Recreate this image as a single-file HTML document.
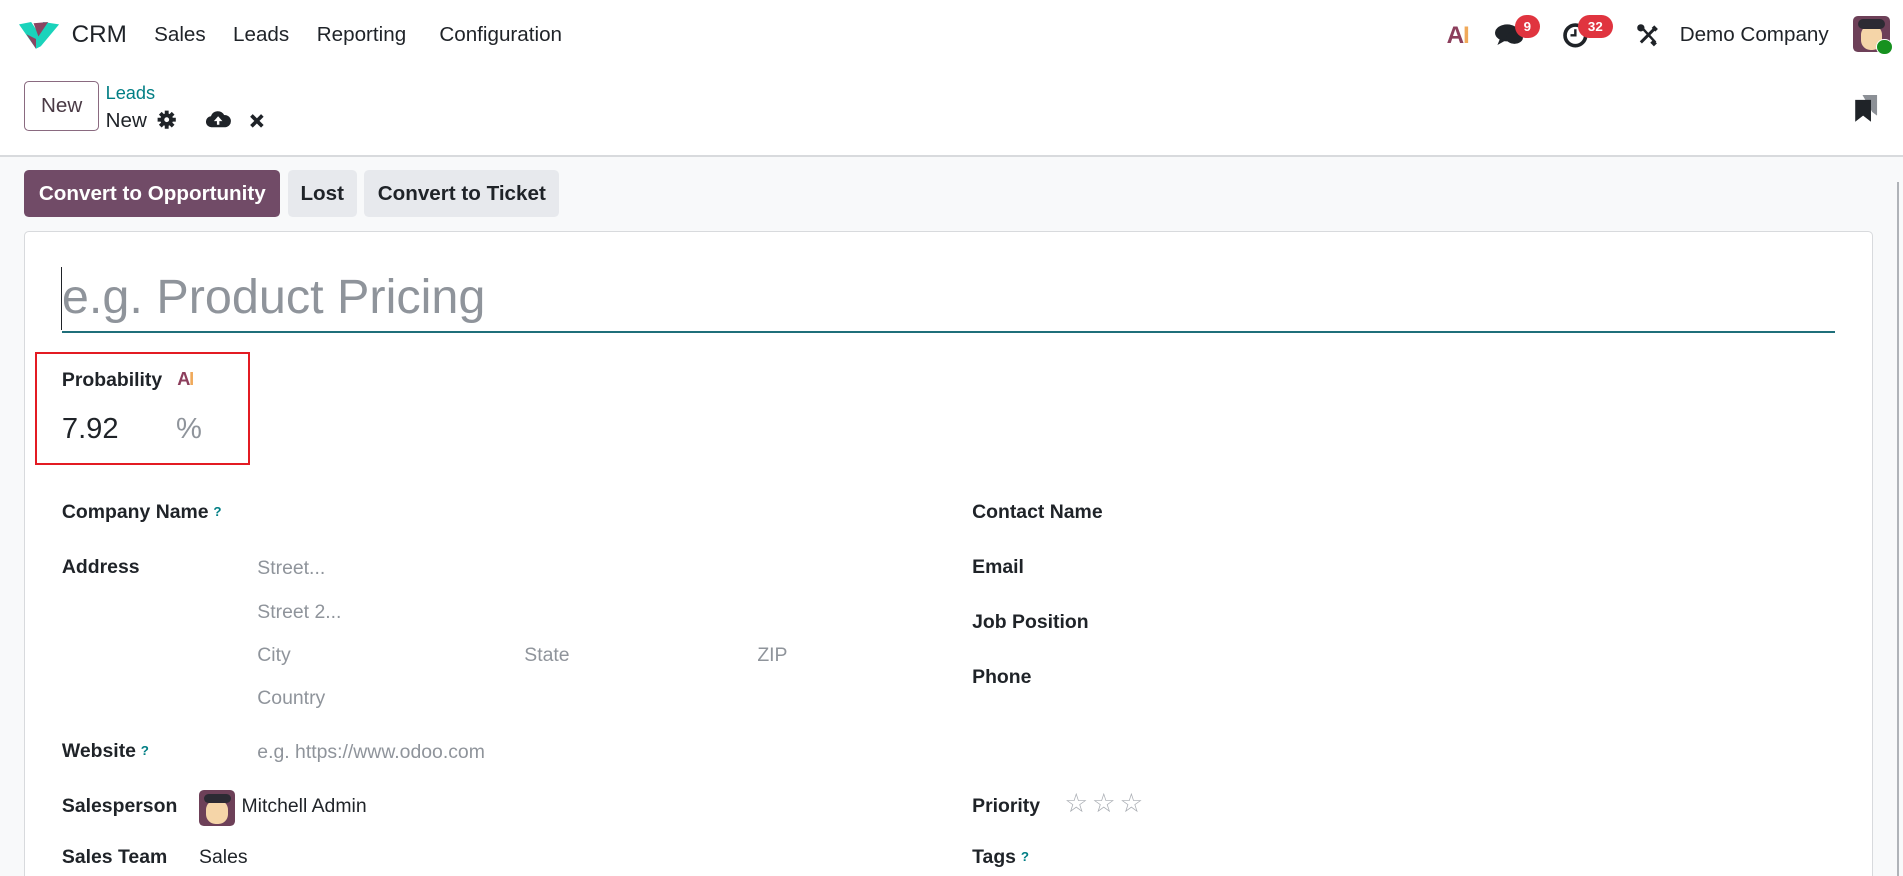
<!DOCTYPE html>
<html><head><meta charset="utf-8"><style>
html,body{margin:0;padding:0;overflow:hidden}
html{background:#f8f9fa}
body{width:1568px;height:722px;zoom:1.21365;overflow:hidden;position:relative;font-family:"Liberation Sans",sans-serif;color:#1f2328;background:#fff}
.a{position:absolute;white-space:nowrap}
.nav{font-size:17px;top:19px}
.lbl{font-size:16px;font-weight:bold;line-height:20px}
.ph{font-size:16px;color:#8f949b;line-height:20px}
.q{color:#017e84;font-size:11px;font-weight:bold;vertical-align:top;margin-left:4px}
.btn{position:absolute;top:140px;height:39px;line-height:39px;border-radius:4px;font-size:17px;font-weight:bold;text-align:center}
.badge{position:absolute;background:#e0343f;color:#fff;font-size:11px;font-weight:bold;border-radius:10px;height:19px;line-height:19px;text-align:center}
</style></head><body>
<svg class="a" style="left:16px;top:18px" width="33" height="22" viewBox="0 0 33 22"><path d="M0 2 L10 0 L14 6 L20 0 L33 2 L18 20 L14 22 Z" fill="#1ad3bb"/><path d="M12 1 L24 0 L16 12 Z" fill="#8a4561"/><path d="M6 10 L14 14 L14 22 Z" fill="#8a4561"/></svg>
<div class="a" style="left:59px;top:17px;font-size:20px">CRM</div>
<div class="a nav" style="left:127px">Sales</div>
<div class="a nav" style="left:192px">Leads</div>
<div class="a nav" style="left:261px">Reporting</div>
<div class="a nav" style="left:362px">Configuration</div>
<div class="a" style="left:1192px;top:18px;font-size:20px;font-weight:bold;letter-spacing:-1px"><span style="color:#8c3e5c">A</span><span style="color:#f0a95a">I</span></div>
<svg class="a" style="left:1232px;top:18px" width="24" height="22" viewBox="0 0 24 22"><ellipse cx="10" cy="9" rx="10" ry="7" fill="#1f2328"/><path d="M4 14 L2 19 L9 15Z" fill="#1f2328"/><ellipse cx="16" cy="13" rx="7" ry="5" fill="#1f2328"/></svg>
<div class="badge" style="left:1248px;top:12px;width:21px">9</div>
<svg class="a" style="left:1287px;top:18px" width="22" height="22" viewBox="0 0 22 22"><circle cx="11" cy="11" r="8.5" fill="none" stroke="#1f2328" stroke-width="3"/><path d="M11 6 V11 H7" stroke="#1f2328" stroke-width="2" fill="none"/></svg>
<div class="badge" style="left:1300px;top:12px;width:29px">32</div>
<svg class="a" style="left:1348px;top:19px" width="20" height="20" viewBox="0 0 20 20"><path d="M4 16 L15 5" stroke="#1f2328" stroke-width="2.5"/><path d="M14 3 L17 6" stroke="#1f2328" stroke-width="3"/><path d="M5 4 L16 16" stroke="#1f2328" stroke-width="2"/><circle cx="4" cy="4" r="3" fill="#1f2328"/><path d="M13 15 L16 18" stroke="#1f2328" stroke-width="3.5"/></svg>
<div class="a" style="left:1384px;top:19px;font-size:17px">Demo Company</div>
<div class="a" style="left:1527px;top:13px;width:30px;height:30px;border-radius:4px;background:#6d4058;overflow:hidden"><div style="position:absolute;left:6px;top:8px;width:18px;height:20px;border-radius:8px;background:#f5d5a8"></div><div style="position:absolute;left:4px;top:3px;width:22px;height:8px;border-radius:6px;background:#2c2a33"></div></div>
<div class="a" style="left:1546px;top:32px;width:12px;height:12px;border-radius:50%;background:#16911f;border:1px solid #fff"></div>
<div class="a" style="left:20px;top:67px;width:60px;height:39px;border:1px solid #8a6a80;border-radius:4px;text-align:center;line-height:39px;font-size:17px;color:#4a3a45">New</div>
<div class="a" style="left:87px;top:68px;font-size:15px;color:#017e84">Leads</div>
<div class="a" style="left:87px;top:90px;font-size:17px">New</div>
<svg class="a" style="left:129px;top:91px" width="16" height="16" viewBox="0 0 16 16"><g stroke="#1f2328" stroke-width="3.2"><path d="M8 0.5V15.5M0.5 8H15.5M2.7 2.7L13.3 13.3M13.3 2.7L2.7 13.3"/></g><circle cx="8" cy="8" r="5.2" fill="#1f2328"/><circle cx="8" cy="8" r="2" fill="#fff"/></svg>
<svg class="a" style="left:170px;top:90px" width="20" height="16" viewBox="0 0 20 16"><path d="M5 15 A4.5 4.5 0 0 1 4 6 A6 6 0 0 1 15 5 A4.5 4.5 0 0 1 16 15Z" fill="#1f2328"/><path d="M10 6 L6.5 10 H9 V13 H11 V10 H13.5Z" fill="#fff"/></svg>
<svg class="a" style="left:205px;top:93px" width="13" height="13" viewBox="0 0 13 13"><path d="M2 2 L11 11 M11 2 L2 11" stroke="#1f2328" stroke-width="3"/></svg>
<svg class="a" style="left:1528px;top:78px" width="20" height="24" viewBox="0 0 20 24"><path d="M7 0 H19 V17 L15 14 Z" fill="#8c9096"/><path d="M1 4 H14 V22 L7.5 17 L1 22Z" fill="#1f2328"/></svg>
<div class="a" style="left:0;top:128px;width:1568px;height:1px;background:#d8dadd"></div>
<div class="a" style="left:0;top:129px;width:1568px;height:593px;background:#f8f9fa"></div>
<div class="btn" style="left:20px;width:211px;background:#714b67;color:#fff">Convert to Opportunity</div>
<div class="btn" style="left:237px;width:57px;background:#e7e9ed">Lost</div>
<div class="btn" style="left:300px;width:161px;background:#e7e9ed">Convert to Ticket</div>
<div class="a" style="left:20px;top:190px;width:1522px;height:531px;background:#fff;border:1px solid #d8dadd;border-bottom:none;border-radius:4px 4px 0 0"></div>
<div class="a" style="left:1563px;top:150px;width:2px;height:572px;background:#b0b3b8"></div>
<div class="a" style="left:50px;top:220px;width:1.5px;height:52px;background:#1f2328"></div>
<div class="a" style="left:51px;top:222px;font-size:40px;color:#8f949b">e.g. Product Pricing</div>
<div class="a" style="left:51px;top:273px;width:1461px;height:1px;background:#1f6f7a"></div>
<div class="a" style="left:29px;top:290px;width:174px;height:90px;border:2px solid #e31b23"></div>
<div class="a lbl" style="left:51px;top:303px">Probability</div>
<div class="a" style="left:146px;top:304px;font-size:15px;font-weight:bold;letter-spacing:-1px"><span style="color:#8c3e5c">A</span><span style="color:#f0a95a">I</span></div>
<div class="a" style="left:51px;top:340px;font-size:24px">7.92</div>
<div class="a" style="left:145px;top:340px;font-size:24px;color:#8f949b">%</div>
<div class="a lbl" style="left:51px;top:412px">Company Name<span class="q">?</span></div>
<div class="a lbl" style="left:51px;top:457px">Address</div>
<div class="a ph" style="left:212px;top:458px">Street...</div>
<div class="a ph" style="left:212px;top:494px">Street 2...</div>
<div class="a ph" style="left:212px;top:530px">City</div>
<div class="a ph" style="left:432px;top:530px">State</div>
<div class="a ph" style="left:624px;top:530px">ZIP</div>
<div class="a ph" style="left:212px;top:565px">Country</div>
<div class="a lbl" style="left:51px;top:609px">Website<span class="q">?</span></div>
<div class="a ph" style="left:212px;top:610px">e.g. https://www.odoo.com</div>
<div class="a lbl" style="left:51px;top:654px">Salesperson</div>
<div class="a" style="left:164px;top:651px;width:30px;height:30px;border-radius:4px;background:#6d4058;overflow:hidden"><div style="position:absolute;left:6px;top:8px;width:18px;height:20px;border-radius:8px;background:#f5d5a8"></div><div style="position:absolute;left:4px;top:3px;width:22px;height:8px;border-radius:6px;background:#2c2a33"></div></div>
<div class="a" style="left:199px;top:655px;font-size:16px">Mitchell Admin</div>
<div class="a lbl" style="left:51px;top:696px">Sales Team</div>
<div class="a" style="left:164px;top:697px;font-size:16px">Sales</div>
<div class="a lbl" style="left:801px;top:412px">Contact Name</div>
<div class="a lbl" style="left:801px;top:457px">Email</div>
<div class="a lbl" style="left:801px;top:503px">Job Position</div>
<div class="a lbl" style="left:801px;top:548px">Phone</div>
<div class="a lbl" style="left:801px;top:654px">Priority</div>
<div class="a" style="left:877px;top:649px;font-size:22px;color:#a9adb3;letter-spacing:3px;line-height:26px">☆☆☆</div>
<div class="a lbl" style="left:801px;top:696px">Tags<span class="q">?</span></div>
</body></html>
